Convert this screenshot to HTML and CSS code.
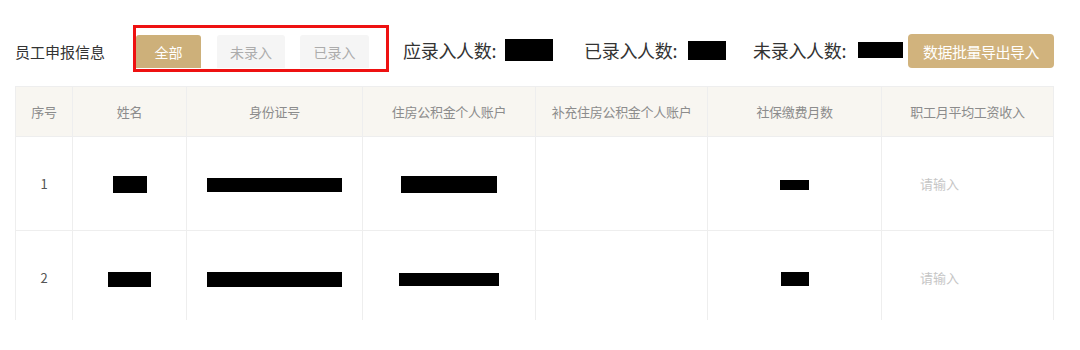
FILE: index.html
```html
<!DOCTYPE html>
<html lang="zh-CN">
<head>
<meta charset="utf-8">
<title>员工申报信息</title>
<link rel="stylesheet" href="styles.css">
</head>
<body>
<div class="page">
  <div class="toolbar">
    <div class="title">员工申报信息</div>
    <div class="tabs">
      <span class="tab tab-active">全部</span>
      <span class="tab tab-a">未录入</span>
      <span class="tab tab-b">已录入</span>
    </div>
    <div class="stat stat-1"><span class="stat-label l1">应录入人数:</span><span class="redact r-s1"></span></div>
    <div class="stat stat-2"><span class="stat-label l2">已录入人数:</span><span class="redact r-s2"></span></div>
    <div class="stat stat-3"><span class="stat-label l3">未录入人数:</span><span class="redact r-s3"></span></div>
    <button class="export">数据批量导出导入</button>
  </div>
  <div class="table-wrap">
    <table class="grid">
      <colgroup>
        <col class="c1"><col class="c2"><col class="c3"><col class="c4"><col class="c5"><col class="c6"><col class="c7">
      </colgroup>
      <thead>
        <tr>
          <th>序号</th>
          <th>姓名</th>
          <th>身份证号</th>
          <th>住房公积金个人账户</th>
          <th>补充住房公积金个人账户</th>
          <th>社保缴费月数</th>
          <th>职工月平均工资收入</th>
        </tr>
      </thead>
      <tbody>
        <tr>
          <td>1</td>
          <td><span class="redact r1-name"></span></td>
          <td><span class="redact r-id"></span></td>
          <td><span class="redact r1-acc"></span></td>
          <td></td>
          <td><span class="redact r1-soc"></span></td>
          <td class="input-cell"><span class="placeholder">请输入</span></td>
        </tr>
        <tr>
          <td>2</td>
          <td><span class="redact r2-name"></span></td>
          <td><span class="redact r-id r2-id"></span></td>
          <td><span class="redact r2-acc"></span></td>
          <td></td>
          <td><span class="redact r2-soc"></span></td>
          <td class="input-cell"><span class="placeholder">请输入</span></td>
        </tr>
      </tbody>
    </table>
  </div>
</div>
</body>
</html>
```
FILE: styles.css
```css
html, body {
  margin: 0;
  padding: 0;
  background: #ffffff;
}
body {
  font-family: "Noto Sans CJK SC", "Noto Sans", "Liberation Sans", sans-serif;
  color: #333333;
  width: 1080px;
  height: 350px;
  overflow: hidden;
}
.page {
  padding: 25px 0 0 15px;
}
.toolbar {
  display: flex;
  align-items: center;
  height: 47px;
}
.title {
  width: 91px;
  font-size: 15px;
  color: #333333;
  margin-top: 7px;
  line-height: 20px;
  white-space: nowrap;
}
.tabs {
  display: flex;
  align-items: flex-start;
  box-sizing: border-box;
  height: 47px;
  margin-left: 27px;
  border: 3px solid #ee1111;
  padding: 7px 17px 0 0;
}
.tab {
  display: flex;
  align-items: center;
  justify-content: center;
  height: 33px;
  font-size: 14px;
  border-radius: 3px 3px 0 0;
  background: #f5f5f5;
  color: #acacac;
}
.tab-active {
  width: 65px;
  background: #cdb07a;
  color: #ffffff;
}
.tab-a {
  width: 68px;
  margin-left: 16px;
}
.tab-b {
  width: 69px;
  margin-left: 15px;
}
.stat {
  display: flex;
  align-items: center;
  margin-top: 3px;
  white-space: nowrap;
}
.stat-label {
  display: inline-block;
  font-size: 18px;
  letter-spacing: -0.3px;
  color: #333333;
}
.l1 { width: 94px; }
.l2 { width: 96px; }
.l3 { width: 97px; }
.stat-1 { margin-left: 14px; }
.stat-2 { margin-left: 31px; }
.stat-3 { margin-left: 27px; }
.redact {
  display: inline-block;
  background: #000000;
  vertical-align: middle;
}
.r-s1 { width: 48px; height: 22px; margin-left: 8px; }
.r-s2 { width: 38px; height: 19px; margin-left: 8px; }
.r-s3 { width: 45px; height: 16px; margin-left: 8px; }
.export {
  margin-left: 5px;
  margin-top: 5px;
  width: 146px;
  height: 34px;
  border: none;
  border-radius: 4px;
  background: #d1b37d;
  color: #ffffff;
  font-family: "Noto Sans CJK SC", "Noto Sans", sans-serif;
  font-size: 15px;
  letter-spacing: -0.5px;
  padding: 0;
}
.table-wrap {
  margin-top: 14px;
  height: 234px;
  overflow: hidden;
}
.grid {
  border-collapse: collapse;
  table-layout: fixed;
  width: 1038px;
}
.c1 { width: 57px; }
.c2 { width: 114px; }
.c3 { width: 176px; }
.c4 { width: 173px; }
.c5 { width: 172px; }
.c6 { width: 174px; }
.c7 { width: 172px; }
.grid th,
.grid td {
  border: 1px solid #eeeeee;
  text-align: center;
  padding: 0;
}
.grid th {
  height: 49px;
  background: #f8f6f1;
  font-weight: normal;
  font-size: 13px;
  color: #8c8c8c;
  letter-spacing: -0.3px;
}
.grid td {
  height: 93px;
  font-size: 13px;
  color: #555555;
}
.grid td.input-cell {
  text-align: left;
}
.placeholder {
  margin-left: 38px;
  font-size: 13px;
  color: #c6c6c6;
}
.r1-name { width: 34px; height: 17px; }
.r-id { width: 135px; height: 14px; }
.r1-acc { width: 96px; height: 17px; }
.r1-soc { width: 29px; height: 10px; }
.r2-name { width: 43px; height: 15px; }
.r2-id { height: 15px; }
.r2-acc { width: 100px; height: 13px; }
.r2-soc { width: 28px; height: 14px; }
```
